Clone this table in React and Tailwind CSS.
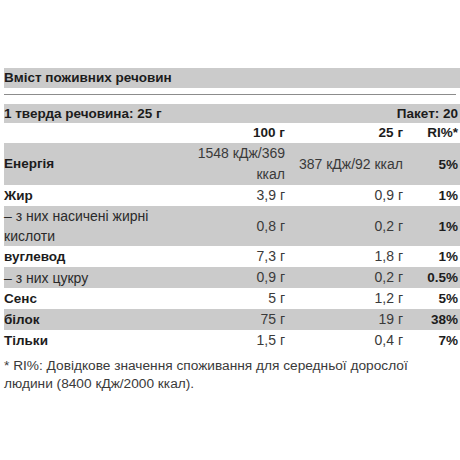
const rows = [
  { label: "Енергія", bold: true, a: "1548 кДж/369 ккал", b: "387 кДж/92 ккал", ri: "5%", shade: true },
  { label: "Жир", bold: true, a: "3,9 г", b: "0,9 г", ri: "1%" },
  { label: "– з них насичені жирні кислоти", a: "0,8 г", b: "0,2 г", ri: "1%", shade: true },
  { label: "вуглевод", bold: true, a: "7,3 г", b: "1,8 г", ri: "1%" },
  { label: "– з них цукру", a: "0,9 г", b: "0,2 г", ri: "0.5%", shade: true },
  { label: "Сенс", bold: true, a: "5 г", b: "1,2 г", ri: "5%" },
  { label: "білок", bold: true, a: "75 г", b: "19 г", ri: "38%", shade: true },
  { label: "Тільки", bold: true, a: "1,5 г", b: "0,4 г", ri: "7%" },
];

function Row({ row }) {
  return (
    <div
      className={`grid grid-cols-[171px_112px_118px_55px] items-center min-h-[21px] ${
        row.shade ? "bg-[#cbcbcb]" : "bg-white"
      }`}
    >
      <div
        className={`leading-[20px] ${
          row.bold ? "font-bold text-[13.5px] text-[#1c1c1c]" : "text-[#2a2a2a]"
        }`}
      >
        {row.label}
      </div>
      <div className="text-right pr-[2px] leading-[21px] text-[#3a3a3a]">{row.a}</div>
      <div className="text-right pr-[2px] leading-[21px] text-[#3a3a3a]">{row.b}</div>
      <div className="text-right pr-[2px] leading-[21px] font-bold text-[13.5px] text-[#1c1c1c]">{row.ri}</div>
    </div>
  );
}

export default function App() {
  return (
    <div className="w-[460px] h-[460px] overflow-hidden bg-white pt-[68px] pl-1 font-['Liberation_Sans',Arial,sans-serif] text-[14px] text-[#222]">
      <div className="h-5 leading-5 bg-[#cbcbcb] font-bold text-[13.5px] text-[#1c1c1c]">Вміст поживних речовин</div>
      <div className="mt-[6px] mr-1 h-px bg-[#8c8c8c]" />

      <div className="mt-[9px] h-[19px] leading-[19px] bg-[#cbcbcb] flex justify-between font-bold text-[13.5px] text-[#1c1c1c] pr-[2px] whitespace-nowrap">
        <span>1 тверда речовина: 25 г</span>
        <span>Пакет: 20</span>
      </div>

      <div className="grid grid-cols-[171px_112px_118px_55px] h-5 leading-5 font-bold text-[13.5px] text-[#1c1c1c]">
        <div />
        <div className="text-right pr-[2px]">100 г</div>
        <div className="text-right pr-[2px]">25 г</div>
        <div className="text-right pr-[2px]">RI%*</div>
      </div>

      {rows.map((row) => (
        <Row key={row.label} row={row} />
      ))}

      <p className="mt-[6px] pr-3 text-[13.7px] leading-[18px] text-[#3a3a3a]">
        * RI%: Довідкове значення споживання для середньої дорослої людини (8400 кДж/2000 ккал).
      </p>
    </div>
  );
}
